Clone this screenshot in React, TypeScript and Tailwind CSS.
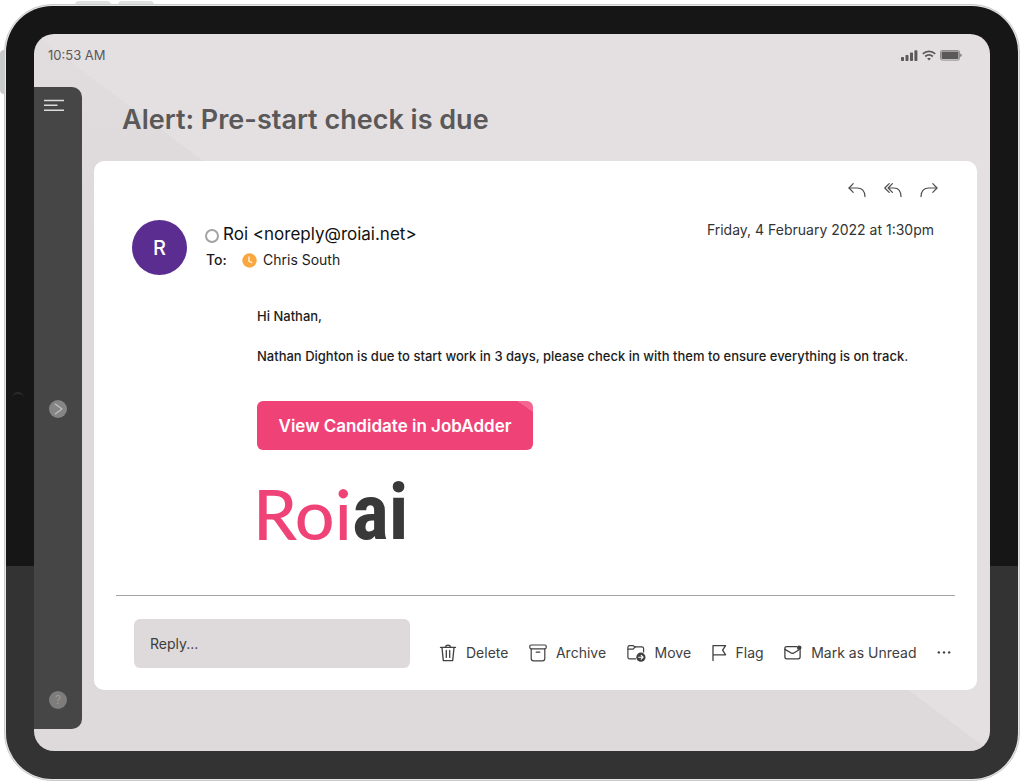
import React, { useState } from 'react';

interface IconProps {
  className?: string;
}

const stroke = {
  fill: 'none',
  stroke: 'currentColor',
  strokeLinecap: 'round' as const,
  strokeLinejoin: 'round' as const,
};

const SignalIcon = () => (
  <svg width="17" height="11" viewBox="0 0 17 11" fill="currentColor" aria-hidden="true">
    <rect x="0" y="7" width="3" height="4" rx="0.8" />
    <rect x="4.5" y="5" width="3" height="6" rx="0.8" />
    <rect x="9" y="2.6" width="3" height="8.4" rx="0.8" />
    <rect x="13.4" y="0.3" width="3" height="10.7" rx="0.8" />
  </svg>
);

const WifiIcon = () => (
  <svg width="14" height="11" viewBox="0 0 14 11" {...stroke} strokeLinecap="butt" strokeWidth="1.8" aria-hidden="true">
    <path d="M0.8 3.9C4.3 0.5 9.7 0.5 13.2 3.9" />
    <path d="M3.2 6.5C5.4 4.5 8.6 4.5 10.8 6.5" />
    <path d="M7 10.4L5.1 8.4C6.2 7.5 7.8 7.5 8.9 8.4Z" fill="currentColor" stroke="none" />
  </svg>
);

const BatteryIcon = () => (
  <svg width="22" height="11" viewBox="0 0 22 11" aria-hidden="true">
    <rect x="0.5" y="0.5" width="19" height="9.6" rx="1.6" fill="none" stroke="#8f8c8d" />
    <rect x="1.5" y="1.5" width="17" height="7.6" rx="0.8" fill="currentColor" />
    <path d="M20.4 3.6C22 4 22 6.6 20.4 7Z" fill="currentColor" />
  </svg>
);

const ReplyIcon = ({ className }: IconProps) => (
  <svg width="18" height="18" viewBox="0 0 18 18" {...stroke} strokeWidth="1.2" className={className} aria-hidden="true">
    <path d="M5.2 2.6L1 7L5.2 11.4" />
    <path d="M1.2 7H9C13.6 7 16.8 10 17 15.6" />
  </svg>
);

const ReplyAllIcon = () => (
  <svg width="18" height="18" viewBox="0 0 18 18" {...stroke} strokeWidth="1.2" aria-hidden="true">
    <path d="M5.2 2.6L0.8 7L5.2 11.4" />
    <path d="M8.4 2.6L4.2 7L8.4 11.4" />
    <path d="M4.4 7H10C14 7 16.8 10 17 15.6" />
  </svg>
);

const TrashIcon = () => (
  <svg width="18" height="18" viewBox="0 0 18 18" {...stroke} strokeWidth="1.3" aria-hidden="true">
    <path d="M1.5 3.4H16.5" />
    <path d="M6.6 3.2C6.6 0.4 11.4 0.4 11.4 3.2" />
    <path d="M3 3.6L4.3 16.6H13.7L15 3.6" />
    <path d="M7.3 6.4V13.4M10.7 6.4V13.4" />
  </svg>
);

const ArchiveIcon = () => (
  <svg width="18" height="18" viewBox="0 0 18 18" {...stroke} strokeWidth="1.2" aria-hidden="true">
    <rect x="0.8" y="1" width="16.4" height="3.8" rx="1.2" />
    <path d="M2.2 5V14.4C2.2 15.8 3 16.8 4.6 16.8H13.4C15 16.8 15.8 15.8 15.8 14.4V5" />
    <path d="M7.2 8.2H10.8" />
  </svg>
);

const MoveIcon = () => (
  <svg width="19" height="18" viewBox="0 0 19 18" {...stroke} strokeWidth="1.2" aria-hidden="true">
    <path d="M8.6 14.8H2.6C1.5 14.8 0.9 14.1 0.9 13.1V3.4C0.9 2.3 1.5 1.6 2.6 1.6H5.8C6.8 1.6 7.2 2.8 8.4 2.8H14.8C16 2.8 16.6 3.5 16.6 4.6V8" />
    <path d="M1 5.2H5.8C7 5.2 7.2 3 8.6 2.9" />
    <circle cx="13.9" cy="13.2" r="4.6" fill="currentColor" stroke="none" />
    <path d="M11.7 13.2H16M14.2 11.3L16.1 13.2L14.2 15.1" stroke="#fff" strokeWidth="1.1" />
  </svg>
);

const FlagIcon = () => (
  <svg width="15" height="18" viewBox="0 0 15 18" {...stroke} strokeWidth="1.3" aria-hidden="true">
    <path d="M1 16.6V1.6H13.6L10.6 6.2L13.6 10.8H1" />
  </svg>
);

const MailIcon = () => (
  <svg width="18" height="18" viewBox="0 0 18 18" {...stroke} strokeWidth="1.3" aria-hidden="true">
    <path d="M12.6 2.6H2.8C1.6 2.6 0.9 3.3 0.9 4.4V13C0.9 14.1 1.6 14.8 2.8 14.8H14.2C15.4 14.8 16.1 14.1 16.1 13V6" />
    <path d="M1 5.4L7.6 9.2C8.2 9.5 8.8 9.5 9.4 9.2L14.4 6.2" />
    <circle cx="15.2" cy="3.8" r="2.3" fill="currentColor" stroke="none" />
  </svg>
);

const MoreIcon = () => (
  <svg width="14" height="18" viewBox="0 0 14 18" fill="currentColor" aria-hidden="true">
    <circle cx="1.8" cy="8.4" r="1.2" />
    <circle cx="7" cy="8.4" r="1.2" />
    <circle cx="12.2" cy="8.4" r="1.2" />
  </svg>
);

const actions = [
  { label: 'Delete', icon: <TrashIcon /> },
  { label: 'Archive', icon: <ArchiveIcon /> },
  { label: 'Move', icon: <MoveIcon /> },
  { label: 'Flag', icon: <FlagIcon /> },
  { label: 'Mark as Unread', icon: <MailIcon /> },
];

const StatusBar = () => (
  <header className="flex h-[53px] items-start justify-between pt-[11px] pr-7 pl-[14px] text-[#5a5859]">
    <span className="text-[13px] leading-5">10:53 AM</span>
    <div className="flex h-5 items-center gap-1">
      <SignalIcon />
      <WifiIcon />
      <BatteryIcon />
    </div>
  </header>
);

const Sidebar = () => (
  <aside className="flex w-12 shrink-0 flex-col items-center justify-between rounded-r-[10px] bg-[#464646] pt-3 pb-5">
    <button type="button" aria-label="Menu" className="-ml-2 flex h-7 items-start text-[#dcdcdc]">
      <svg width="20" height="14" viewBox="0 0 20 14" stroke="currentColor" strokeWidth="1.5" aria-hidden="true">
        <path d="M0 1.5H20M0 6.3H13.5M0 11.2H20" />
      </svg>
    </button>
    <button type="button" aria-label="Expand" className="flex size-[18px] items-center justify-center rounded-full bg-[#858585] text-[#c4c4c4]">
      <svg width="18" height="18" viewBox="0 0 18 18" {...stroke} strokeWidth="1.1" aria-hidden="true">
        <path d="M6.2 4L13 9L6.2 14" />
      </svg>
    </button>
    <button type="button" aria-label="Help" className="size-[18px] rounded-full bg-[#7d7d7d] text-xs leading-[18px] text-[#9a9a9a]">
      ?
    </button>
  </aside>
);

const Logo = () => (
  <svg width="164" height="112" viewBox="0 0 164 112" className="mt-1 -ml-1" role="img" aria-label="Roiai">
    <text x="0" y="86" fontFamily="Lato, sans-serif" fontSize="70" fill="#ef4378">
      Roi
    </text>
    <text
      x="99"
      y="85"
      fontFamily="'Roboto Condensed', 'Open Sans Condensed', Roboto, sans-serif"
      fontSize="78"
      fontWeight="700"
      fill="#39393a"
    >
      ai
    </text>
  </svg>
);

const MessageHeader = () => (
  <div className="mt-[21px] flex items-start pr-[43px] pl-[38px]">
    <div className="flex size-[55px] shrink-0 items-center justify-center rounded-full bg-[#5b2d90] text-xl font-medium text-white">
      R
    </div>
    <div className="ml-[18px] flex-1">
      <div className="flex items-center gap-1 pt-0.5">
        <span className="mt-1 size-[14px] rounded-full border-2 border-[#a3a3a3]" />
        <span className="text-[17px] leading-6 text-[#111]">Roi &lt;noreply@roiai.net&gt;</span>
      </div>
      <div className="mt-1 flex items-center text-sm leading-5 text-[#1c1c1c]">
        <span className="w-[37px] pl-px font-medium">To:</span>
        <svg width="15" height="15" viewBox="0 0 15 15" className="mr-1.5" aria-hidden="true">
          <circle cx="7.5" cy="7.5" r="7.2" fill="#fba740" />
          <path d="M7 3.8V8.2L9.8 9.6" {...stroke} stroke="#fff" strokeWidth="1.2" />
        </svg>
        <span>Chris South</span>
      </div>
    </div>
    <time className="text-sm leading-5 text-[#333]">Friday, 4 February 2022 at 1:30pm</time>
  </div>
);

const ReplyBar = () => {
  const [reply, setReply] = useState('');

  return (
    <div className="flex items-start pt-[23px] pr-[26px] pb-[22px] pl-10">
      <input
        type="text"
        aria-label="Reply"
        placeholder="Reply..."
        value={reply}
        onChange={(e) => setReply(e.target.value)}
        className="h-[49px] w-[276px] min-w-0 rounded-md bg-[#dedadb] px-4 text-sm text-[#3c3c3c] placeholder:text-[#3c3c3c] focus:outline-none"
      />
      <div className="mt-6 ml-[29px] flex flex-1 items-center justify-between text-[#404040]">
        {actions.map(({ label, icon }) => (
          <button key={label} type="button" className="flex items-center gap-[9px] text-sm leading-5 whitespace-nowrap">
            {icon}
            {label}
          </button>
        ))}
        <button type="button" aria-label="More">
          <MoreIcon />
        </button>
      </div>
    </div>
  );
};

const MessageCard = () => (
  <article className="flex flex-1 flex-col rounded-[10px] bg-white">
    <div className="flex justify-end gap-[18px] pt-5 pr-[39px] text-[#4c4c4c]">
      <button type="button" aria-label="Reply"><ReplyIcon /></button>
      <button type="button" aria-label="Reply all"><ReplyAllIcon /></button>
      <button type="button" aria-label="Forward"><ReplyIcon className="-scale-x-100" /></button>
    </div>
    <MessageHeader />
    <div className="pt-[31px] pl-[163px] text-[13px] leading-5 font-medium text-[#1c1c1c]">
      <p>Hi Nathan,</p>
      <p className="mt-5">
        Nathan Dighton is due to start work in 3 days, please check in with them to ensure everything is on track.
      </p>
      <a
        href="#candidate"
        className="mt-[35px] flex h-[49px] w-[276px] items-center justify-center rounded-md bg-[linear-gradient(215deg,#f36692_9px,#ef4378_9px)] text-[17px] font-semibold text-white"
      >
        View Candidate in JobAdder
      </a>
      <Logo />
    </div>
    <hr className="mx-[22px] mt-auto border-[#a5a5a5]" />
    <ReplyBar />
  </article>
);

const App: React.FC = () => {
  return (
    <div className="relative flex min-h-screen bg-white p-1 pb-0.5 font-['Inter','Liberation_Sans',sans-serif]">
      {/* hardware buttons */}
      <span className="absolute top-px left-[75px] h-1 w-9 rounded-t bg-[#dfe1e0]" />
      <span className="absolute top-px left-[118px] h-1 w-9 rounded-t bg-[#dfe1e0]" />
      <span className="absolute top-[50px] left-0 h-11 w-1 rounded-l bg-[#c9cbca]" />

      <div className="relative flex flex-1 rounded-[48px] border border-[#c9cbca] bg-[#e6e8e7] p-px">
        <div className="flex flex-1 rounded-[46px] bg-[linear-gradient(#161616_72.4%,#333_72.4%)] p-7">
          <div className="flex flex-1 flex-col overflow-hidden rounded-[20px] bg-[linear-gradient(#e4e0e180,#e4e0e100_200px),linear-gradient(to_top_right,#dedadb_50%,#e4e0e1_50%)] pb-[22px]">
            <StatusBar />
            <div className="flex flex-1">
              <Sidebar />
              <main className="-mb-[22px] flex min-w-0 flex-1 flex-col pr-[13px] pb-[61px] pl-3">
                <h1 className="px-7 pt-[13px] pb-[21px] text-[27px] leading-10 font-semibold text-[#5a5859]">
                  Alert: Pre-start check is due
                </h1>
                <MessageCard />
              </main>
            </div>
          </div>
        </div>
      </div>

      {/* front camera */}
      <span className="absolute top-1/2 left-3 size-3 rounded-full border-t-2 border-[#2b2b2b]" />
    </div>
  );
};

export default App;
